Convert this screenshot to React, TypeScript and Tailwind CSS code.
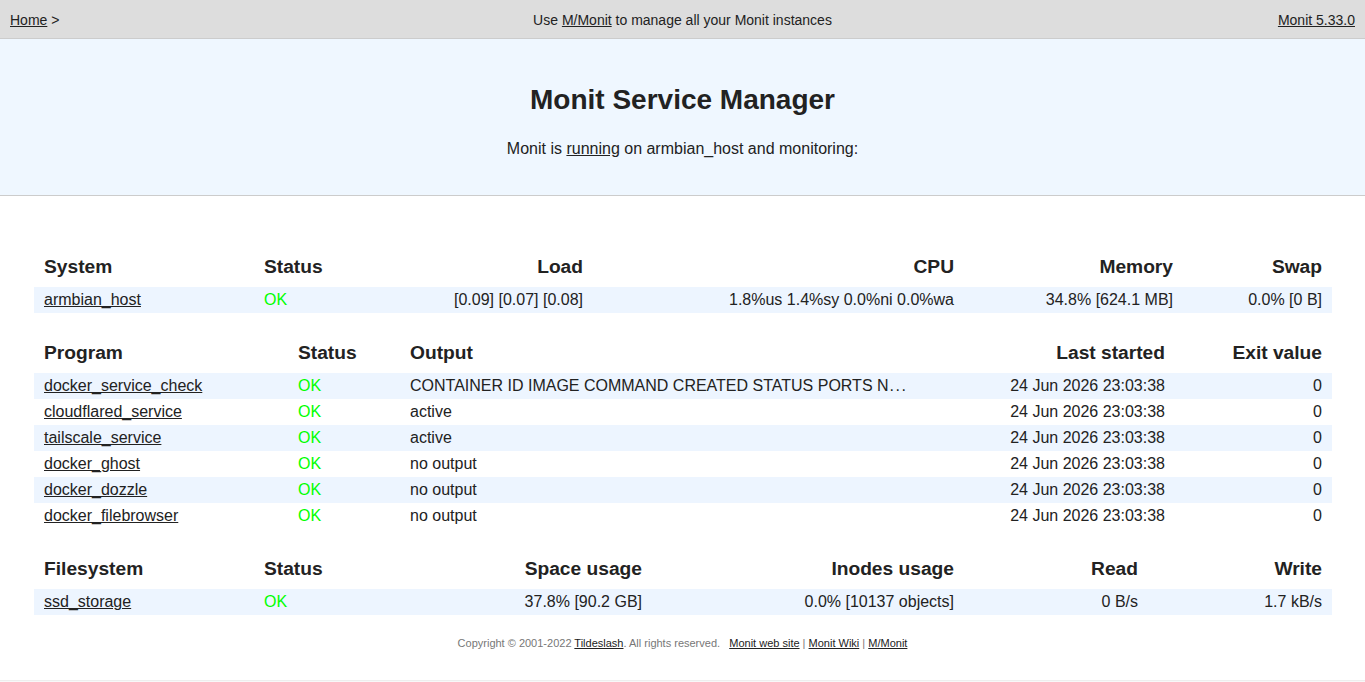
import React from "react";

const font = { fontFamily: '"Liberation Sans", Arial, Helvetica, sans-serif' };

function Ok() {
  return <span className="text-[#00ff00]">OK</span>;
}

function L({ children }: { children: React.ReactNode }) {
  return <a href="#" className="underline text-[#222]">{children}</a>;
}

type Cell = { c: React.ReactNode; r?: boolean };

function Table({ cols, head, rows }: { cols: string; head: Cell[]; rows: Cell[][] }) {
  return (
    <div className="w-[1298px] ml-[34px]">
      <div className={`grid ${cols} font-bold text-[19.2px] leading-[23px] pt-[10px] pb-[9px]`}>
        {head.map((h, i) => (
          <div key={i} className={`px-[10px] ${h.r ? "text-right" : "text-left"}`}>{h.c}</div>
        ))}
      </div>
      {rows.map((row, ri) => (
        <div key={ri} className={`grid ${cols} text-[16px] leading-[20px] ${ri % 2 === 0 ? "bg-[#edf5ff]" : "bg-white"}`}>
          {row.map((h, i) => (
            <div key={i} className={`px-[10px] py-[3px] whitespace-nowrap ${h.r ? "text-right" : "text-left"}`}>{h.c}</div>
          ))}
        </div>
      ))}
    </div>
  );
}

const dockerOut = (
  <>
    CONTAINER ID IMAGE COMMAND CREATED STATUS PORTS N<span className="ml-[1px] tracking-[1.5px]">...</span>
  </>
);

const programs: [string, React.ReactNode][] = [
  ["docker_service_check", dockerOut],
  ["cloudflared_service", "active"],
  ["tailscale_service", "active"],
  ["docker_ghost", "no output"],
  ["docker_dozzle", "no output"],
  ["docker_filebrowser", "no output"],
];

export default function App() {
  return (
    <div style={font} className="text-[#222] bg-white min-h-[682px]">
      <div className="h-[39px] bg-[#dddddd] border-b border-[#cccccc] flex items-center justify-between px-[10px] text-[14px] pt-[3px]">
        <div className="w-[300px]"><L>Home</L> &gt;</div>
        <div>Use <L>M/Monit</L> to manage all your Monit instances</div>
        <div className="w-[300px] text-right"><L>Monit 5.33.0</L></div>
      </div>
      <div className="h-[157px] bg-[#eff7ff] border-b border-[#cccccc] flex flex-col items-center pt-[45px]">
        <h1 className="text-[28px] leading-[32px] font-bold">Monit Service Manager</h1>
        <p className="text-[16px] leading-[20px] mt-[23px]">Monit is <L>running</L> on armbian_host and monitoring:</p>
      </div>
      <div className="pt-[49px] flex flex-col gap-[18px]">
        <Table
          cols="grid-cols-[220px_140px_199px_371px_219px_149px]"
          head={[{ c: "System" }, { c: "Status" }, { c: "Load", r: true }, { c: "CPU", r: true }, { c: "Memory", r: true }, { c: "Swap", r: true }]}
          rows={[[
            { c: <L>armbian_host</L> },
            { c: <Ok /> },
            { c: "[0.09] [0.07] [0.08]", r: true },
            { c: "1.8%us 1.4%sy 0.0%ni 0.0%wa", r: true },
            { c: "34.8% [624.1 MB]", r: true },
            { c: "0.0% [0 B]", r: true },
          ]]}
        />
        <Table
          cols="grid-cols-[254px_112px_521px_254px_157px]"
          head={[{ c: "Program" }, { c: "Status" }, { c: "Output" }, { c: "Last started", r: true }, { c: "Exit value", r: true }]}
          rows={programs.map(([n, o]) => [
            { c: <L>{n}</L> },
            { c: <Ok /> },
            { c: o },
            { c: "24 Jun 2026 23:03:38", r: true },
            { c: "0", r: true },
          ])}
        />
        <Table
          cols="grid-cols-[220px_140px_258px_312px_184px_184px]"
          head={[{ c: "Filesystem" }, { c: "Status" }, { c: "Space usage", r: true }, { c: "Inodes usage", r: true }, { c: "Read", r: true }, { c: "Write", r: true }]}
          rows={[[
            { c: <L>ssd_storage</L> },
            { c: <Ok /> },
            { c: "37.8% [90.2 GB]", r: true },
            { c: "0.0% [10137 objects]", r: true },
            { c: "0 B/s", r: true },
            { c: "1.7 kB/s", r: true },
          ]]}
        />
      </div>
      <div className="mt-[22px] text-center text-[11px] leading-[13px] text-[#777]">
        Copyright © 2001-2022 <L>Tildeslash</L>. All rights reserved.&nbsp;&nbsp;&nbsp;
        <L>Monit web site</L> | <L>Monit Wiki</L> | <L>M/Monit</L>
      </div>
      <div className="mt-[30px] border-t border-[#eeeeee] h-[20px] bg-[#f8f8f8]"></div>
    </div>
  );
}
